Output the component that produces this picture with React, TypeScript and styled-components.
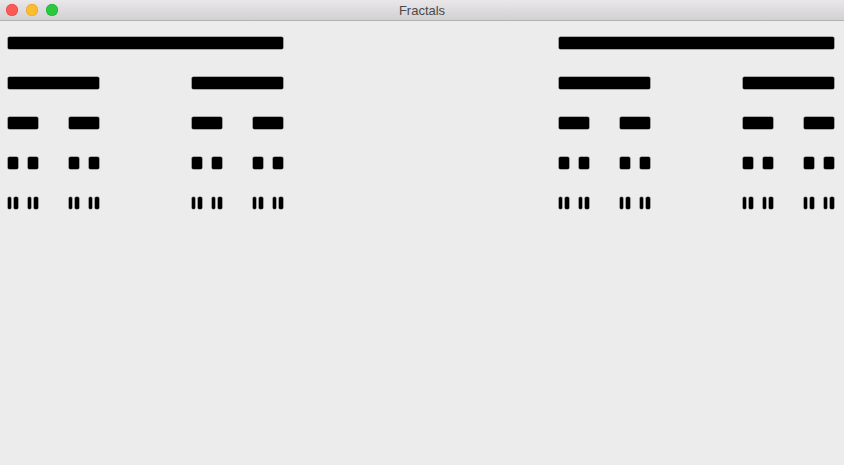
import React from "react";
import styled, { createGlobalStyle } from "styled-components";

const Global = createGlobalStyle`
  html, body { margin: 0; padding: 0; background: #ececec; }
  body { width: 844px; height: 465px; overflow: hidden; }
`;

const Window = styled.div`
  width: 844px;
  height: 465px;
  display: flex;
  flex-direction: column;
  background: #ececec;
`;

const TitleBar = styled.div`
  height: 20px;
  flex: none;
  display: flex;
  align-items: center;
  position: relative;
  background: linear-gradient(#e9e7e9, #d2d0d2);
  border-bottom: 1px solid #b1b1b1;
`;

const Lights = styled.div`
  display: flex;
  gap: 8px;
  padding-left: 6px;
`;

const Light = styled.div<{ $c: string; $b: string }>`
  width: 12px;
  height: 12px;
  border-radius: 50%;
  background: ${(p) => p.$c};
  box-shadow: inset 0 0 0 0.5px ${(p) => p.$b};
`;

const Title = styled.div`
  position: absolute;
  left: 0;
  right: 0;
  top: 0;
  bottom: 0;
  display: flex;
  align-items: center;
  justify-content: center;
  font-family: "Liberation Sans", Arial, sans-serif;
  font-size: 13px;
  color: #4a4a4a;
`;

const Canvas = styled.div`
  display: flex;
  flex-direction: column;
  gap: 28px;
  padding: 15.5px 0 0 7.6px;
`;

const Segment = styled.div`
  display: flex;
  justify-content: space-between;
  flex: none;
`;

const Bar = styled.div`
  height: 12px;
  background: #000;
  border-radius: 1.5px;
  flex: none;
  box-shadow: 0 0 0 0.6px rgba(0, 0, 0, 0.55);
`;

const WIDTHS = [826, 275, 91, 30, 10, 3.3];

function Cantor({ level, depth }: { level: number; depth: number }) {
  const width = WIDTHS[level];
  if (level === depth) return <Bar style={{ width }} />;
  return (
    <Segment style={{ width }}>
      <Cantor level={level + 1} depth={depth} />
      <Cantor level={level + 1} depth={depth} />
    </Segment>
  );
}

export default function App() {
  return (
    <>
      <Global />
      <Window>
        <TitleBar>
          <Lights>
            <Light $c="#fc5a55" $b="#e0443f" />
            <Light $c="#fdbb2e" $b="#df9e23" />
            <Light $c="#2ac940" $b="#1eaa30" />
          </Lights>
          <Title>Fractals</Title>
        </TitleBar>
        <Canvas>
          {[1, 2, 3, 4, 5].map((d) => (
            <Cantor key={d} level={0} depth={d} />
          ))}
        </Canvas>
      </Window>
    </>
  );
}
